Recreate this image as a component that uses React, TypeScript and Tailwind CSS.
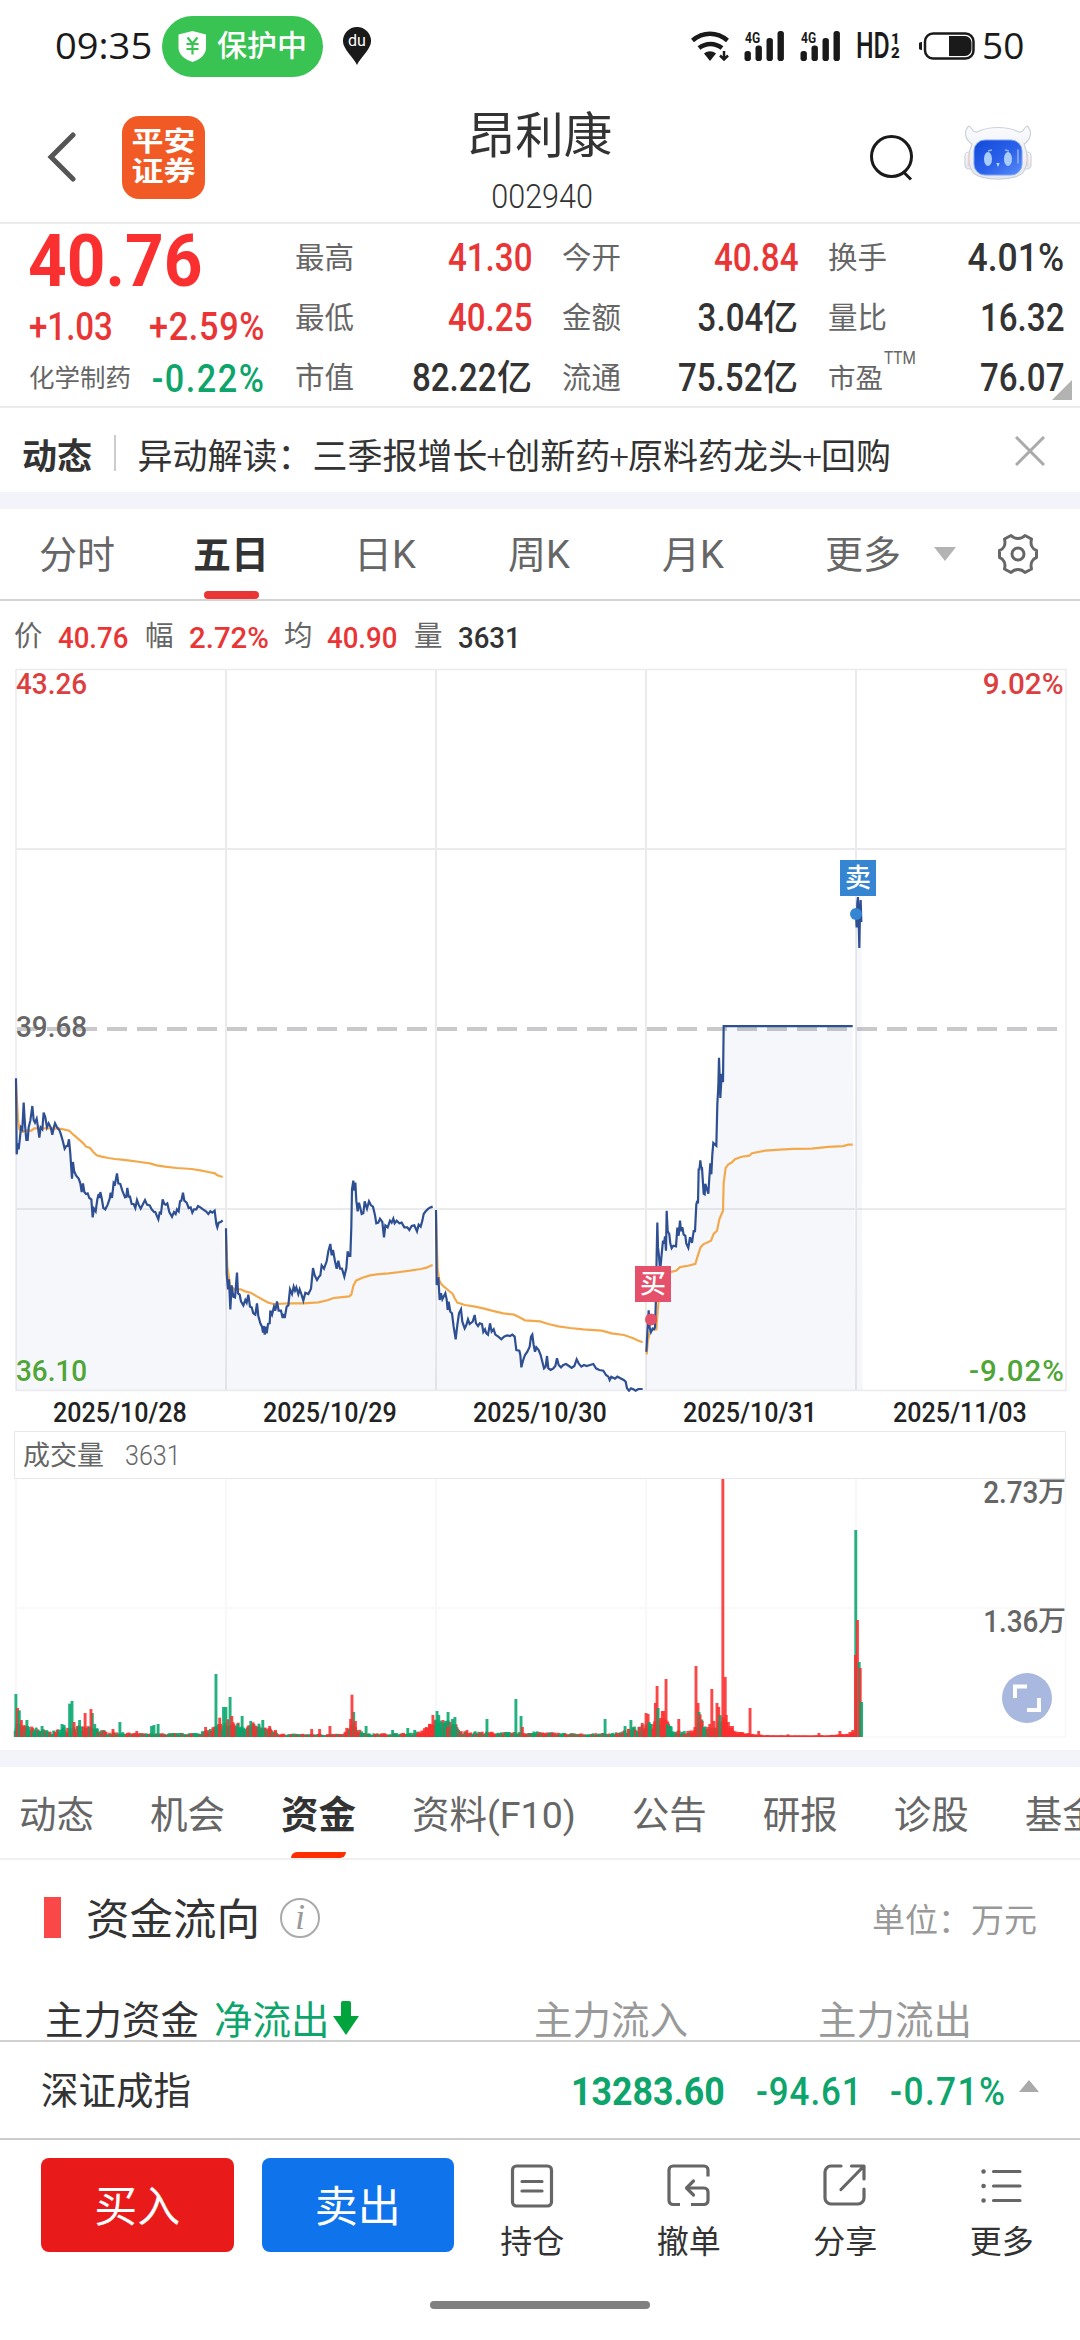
import type { ReactNode } from 'react';

/* ---------- price chart data (local units of each segment group) ---------- */

const DAY1_PRICE =
  '48,115 50,343 53,310 56,328 60,292 63,262 67,268 71,188 75,255 79,300 83,300 86,262 91,242 97,198 101,240 105,248 110,236 114,262 118,293 122,262 127,268 131,218 136,232 141,262 146,250 152,262 157,284 161,264 165,250 171,262 178,270 183,284 189,305 194,326 199,318 203,318 207,298 211,342 216,416 219,366 222,392 228,406 236,416 241,430 245,456 249,430 253,456 258,462 263,460 268,474 274,478 278,532 282,506 287,514 292,478 296,462 299,474 301,456 305,474 310,504 316,508 323,494 329,476 332,458 336,474 341,428 345,432 351,400 355,430 361,432 367,452 375,472 379,470 382,444 386,470 390,470 395,492 401,492 406,504 411,480 416,494 422,506 428,494 435,480 441,494 449,496 455,508 462,516 466,516 470,526 475,538 479,518 483,520 488,478 493,492 497,494 502,490 508,516 516,530 522,516 527,522 531,508 536,514 540,484 544,482 549,458 553,482 560,488 566,504 572,502 577,518 582,508 589,508 594,498 601,502 609,508 618,514 625,522 631,514 637,518 644,512 649,552 652,562 656,548 662,546 668,541';
const DAY1_AVG =
  '48,130 54,238 58,268 66,276 76,272 94,272 103,265 150,265 178,266 190,268 208,272 220,284 234,296 250,310 258,320 270,324 280,336 290,346 305,350 325,354 345,357 365,359 390,362 420,366 450,370 470,376 495,380 530,384 575,387 605,392 625,396 645,400 652,406 668,411';
const DAY2_PRICE =
  '678,565 680,700 684,748 687,718 691,808 695,736 700,770 705,772 711,698 714,760 719,764 723,784 730,796 736,780 740,788 745,764 750,800 755,802 760,820 766,824 771,790 775,828 781,850 786,860 789,878 791,858 794,884 797,860 800,880 804,852 809,850 811,812 816,824 822,800 826,812 831,784 836,812 843,812 848,834 851,822 854,834 860,800 865,796 870,748 876,762 881,740 885,752 889,742 895,762 899,748 904,762 910,782 916,758 925,762 933,746 939,684 944,706 951,720 957,710 961,706 965,676 972,686 980,664 985,634 991,612 995,646 999,630 1005,664 1010,686 1015,662 1020,686 1026,686 1033,710 1039,684 1043,634 1047,648 1051,648 1054,560 1056,448 1060,422 1063,452 1066,428 1069,482 1073,514 1077,488 1081,504 1085,522 1090,520 1094,484 1101,506 1107,484 1113,496 1119,500 1125,526 1129,550 1135,548 1140,536 1147,546 1152,592 1156,556 1163,562 1170,542 1175,548 1180,536 1184,550 1190,542 1198,550 1205,548 1213,562 1222,562 1228,570 1235,558 1243,556 1251,574 1256,554 1262,560 1267,542 1271,522 1277,514 1285,506 1292,502 1298,500';
const DAY2_AVG =
  '678,580 682,680 690,735 702,748 722,748 735,754 752,758 772,770 790,780 805,788 820,792 870,790 910,790 955,787 985,780 1000,774 1020,772 1048,769 1054,764 1060,738 1068,722 1085,714 1110,706 1130,703 1165,700 1200,696 1230,692 1262,687 1280,683 1290,678 1298,675';
const DAY3_PRICE =
  '48,510 50,735 55,712 59,780 63,760 67,778 72,768 76,760 80,778 83,810 86,785 91,815 96,820 101,860 107,898 112,855 117,820 123,808 127,845 134,865 139,855 144,838 149,852 158,845 164,825 168,850 174,858 179,850 186,852 190,876 195,868 199,880 204,884 210,850 215,875 221,868 226,884 235,890 244,898 252,890 261,886 270,888 277,884 284,890 289,930 298,932 301,945 304,982 309,962 315,945 322,935 329,920 333,890 337,884 341,915 345,935 349,922 356,930 362,945 367,965 372,985 377,980 381,948 385,985 392,990 400,985 406,978 411,955 416,975 423,982 430,975 438,972 447,978 455,984 463,978 470,958 476,970 484,980 492,975 500,978 510,975 520,972 528,985 538,990 550,992 558,1005 565,1010 569,1020 574,1010 585,1016 592,1010 600,1014 611,1020 617,1025 621,1045 627,1052 633,1045 640,1048 647,1052 655,1047 668,1047';
const DAY3_AVG =
  '48,520 53,690 58,722 64,732 72,740 84,750 98,762 104,775 112,788 135,795 165,800 190,805 215,812 250,820 282,824 298,832 315,841 360,844 385,852 415,859 450,864 490,868 545,872 575,880 612,885 640,895 652,901 668,907';
const DAY4_PRICE =
  '49,1433 52,1380 56,1317 59,1365 63,1378 68,1368 72,1370 75,1365 78,1280 80,1160 82,1071 84,1140 87,1165 90,1200 92,1190 96,1150 99,1122 102,1130 105,1110 108,1150 110,1038 113,1095 118,1104 121,1130 125,1143 130,1136 138,1138 142,1085 146,1108 150,1066 153,1095 157,1084 161,1105 166,1108 169,1130 175,1142 180,1112 186,1128 191,1095 195,1095 199,1020 202,1010 204,1018 206,920 208,925 211,897 213,915 216,918 221,990 224,992 226,963 230,975 235,990 238,945 241,905 244,936 247,880 250,848 259,856 262,740 265,690 267,610 271,722 275,655 279,678 281,521 668,521';
const DAY4_AVG =
  '50,1440 54,1400 60,1376 70,1370 79,1370 82,1330 87,1280 95,1225 120,1210 138,1206 150,1196 175,1192 196,1187 203,1165 212,1140 220,1132 243,1122 251,1103 261,1094 268,1062 279,1038 281,960 287,918 295,908 305,903 315,894 335,887 358,884 366,877 405,870 450,867 490,865 545,864 595,859 640,857 655,853 668,853';
const DAY5_PRICE = '678,208 680,245 682,175 684,160 686,225 688,302 690,200 692,168 694,230';

function PriceSegment({ price, avg, base, close }: { price: string; avg?: string; base: number; close: number }) {
  const first = price.slice(0, price.indexOf(','));
  return (
    <>
      <polygon points={`${first},${base} ${price} ${close},${base}`} fill="#3f63b8" fillOpacity={0.05} />
      {avg && <polyline points={avg} fill="none" stroke="#f3a94b" strokeWidth={2.2} vectorEffect="non-scaling-stroke" />}
      <polyline points={price} fill="none" stroke="#2f4f93" strokeWidth={2.2} vectorEffect="non-scaling-stroke" />
    </>
  );
}

function PriceChart() {
  return (
    <svg className="block" width={1080} height={724} viewBox="0 668 1080 724">
      <g stroke="#ebebed" strokeWidth={2} fill="none">
        <rect x={16} y={669.5} width={1050} height={721} strokeWidth={1.5} />
        <path d="M226 669V1390M436 669V1390M646 669V1390M856 669V1390" />
        <path d="M16 849H1066M16 1209H1066" />
      </g>
      <path d="M17 1029H1062" stroke="#c9c9cb" strokeWidth={4} strokeDasharray="20 10" />
      <g transform="translate(0 1040) scale(0.33333)">
        <PriceSegment price={DAY1_PRICE} avg={DAY1_AVG} base={1050} close={678} />
        <PriceSegment price={DAY2_PRICE} avg={DAY2_AVG} base={1050} close={1308} />
      </g>
      <g transform="translate(420 1040) scale(0.33333)">
        <PriceSegment price={DAY3_PRICE} avg={DAY3_AVG} base={1050} close={678} />
      </g>
      <g transform="translate(630 840) scale(0.33333 0.35714)">
        <PriceSegment price={DAY4_PRICE} avg={DAY4_AVG} base={1540} close={678} />
        <PriceSegment price={DAY5_PRICE} base={1540} close={698} />
      </g>
      <circle cx={651} cy={1319.5} r={6} fill="#e5506a" />
      <circle cx={856} cy={914} r={6} fill="#3585d3" />
    </svg>
  );
}

/* ---------- volume chart ---------- */

const ENVELOPE: [number, number][] = [
  [42, 50], [70, 36], [110, 28], [150, 16], [200, 36], [280, 30], [310, 16], [430, 10], [560, 12], [600, 20],
  [640, 44], [700, 46], [790, 26], [812, 9], [1000, 9], [1018, 60], [1045, 22], [1070, 10], [1200, 12], [1235, 28],
  [1262, 56], [1320, 48], [1335, 18], [1480, 14], [1560, 16], [1600, 14], [1700, 9], [1800, 14], [1860, 38],
  [1925, 66], [1960, 18], [2010, 20], [2040, 56], [2062, 24], [2100, 60], [2130, 22], [2180, 9], [2240, 4],
  [2400, 4], [2470, 10], [2482, 22],
];
const SPIKES: [number, number, 'r' | 'g'][] = [
  [46, 939, 'g'], [51, 981, 'r'], [56, 988, 'g'], [62, 1017, 'r'], [78, 1017, 'g'], [122, 1035, 'g'], [180, 1029, 'g'],
  [186, 1032, 'g'], [202, 968, 'g'], [209, 960, 'g'], [215, 1023, 'r'], [231, 1017, 'g'], [247, 996, 'r'],
  [268, 996, 'g'], [264, 984, 'r'], [275, 1029, 'g'], [328, 1044, 'r'], [348, 1023, 'g'], [397, 1050, 'r'],
  [440, 1035, 'g'], [447, 1032, 'g'], [459, 1029, 'g'], [597, 1038, 'r'], [627, 879, 'g'], [638, 1010, 'r'],
  [649, 978, 'g'], [656, 978, 'g'], [662, 1015, 'r'], [668, 948, 'g'], [673, 1005, 'r'], [679, 1028, 'r'],
  [690, 1028, 'g'], [703, 1005, 'g'], [728, 1020, 'g'], [735, 1024, 'r'], [752, 1028, 'g'], [763, 1017, 'g'],
  [783, 1035, 'r'], [800, 1047, 'r'], [905, 1044, 'r'], [928, 1044, 'r'], [958, 1035, 'r'], [1027, 993, 'g'],
  [1018, 1014, 'r'], [1022, 941, 'r'], [1032, 1020, 'r'], [1063, 1035, 'g'], [1140, 1047, 'g'], [1184, 1041, 'g'],
  [1204, 1047, 'g'], [1240, 1042, 'r'], [1247, 1029, 'r'], [1257, 1002, 'r'], [1269, 990, 'g'], [1274, 1002, 'g'],
  [1283, 1023, 'g'], [1292, 1026, 'g'], [1301, 993, 'g'], [1300, 1038, 'r'], [1314, 1014, 'g'], [1321, 1008, 'g'],
  [1356, 1047, 'r'], [1414, 1014, 'g'], [1498, 954, 'g'], [1513, 1005, 'g'], [1517, 1038, 'r'], [1757, 1014, 'g'],
  [1815, 1035, 'g'], [1832, 1017, 'g'], [1865, 1026, 'r'], [1876, 996, 'r'], [1882, 999, 'r'], [1885, 1023, 'g'],
  [1903, 966, 'r'], [1908, 915, 'r'], [1911, 981, 'g'], [1918, 1011, 'r'], [1923, 990, 'r'], [1928, 990, 'r'],
  [1934, 894, 'r'], [1938, 1029, 'g'], [1971, 1014, 'r'], [2027, 966, 'r'], [2021, 855, 'r'], [2030, 993, 'g'],
  [2033, 1000, 'r'], [2039, 1020, 'r'], [2043, 1038, 'g'], [2061, 1029, 'r'], [2067, 924, 'r'], [2073, 1020, 'r'],
  [2082, 966, 'r'], [2087, 978, 'r'], [2091, 1002, 'g'], [2106, 888, 'r'], [2099, 293, 'r'], [2109, 1002, 'r'],
  [2115, 1023, 'r'], [2127, 1035, 'r'], [2178, 981, 'r'], [2203, 1050, 'r'], [2288, 1060, 'r'], [2378, 1056, 'r'],
  [2439, 1050, 'r'], [2468, 1053, 'r'], [2476, 1047, 'r'], [2485, 447, 'g'], [2484, 822, 'r'], [2490, 717, 'r'],
  [2495, 843, 'g'], [2498, 861, 'r'], [2502, 963, 'g'],
];

function envelopeAt(x: number) {
  for (let i = 1; i < ENVELOPE.length; i++) {
    const [x0, h0] = ENVELOPE[i - 1];
    const [x1, h1] = ENVELOPE[i];
    if (x <= x1) return h0 + ((h1 - h0) * (x - x0)) / (x1 - x0);
  }
  return 0;
}

function baseBars() {
  const bars: [number, number, 'r' | 'g'][] = [];
  let seed = 7;
  const rnd = () => {
    seed = (seed * 16807) % 2147483647;
    return seed / 2147483647;
  };
  for (let x = 44; x < 2482; x += 2.54) {
    const h = envelopeAt(x) * (0.35 + rnd() * 0.65);
    const allRed = x > 2095 || (x > 1210 && x < 1258);
    bars.push([x, 1067 - Math.max(3, h), allRed || rnd() > 0.52 ? 'r' : 'g']);
  }
  return bars;
}

function VolumeChart() {
  const bars = [...baseBars(), ...SPIKES];
  return (
    <svg className="block" width={1080} height={272} viewBox="0 1478 1080 272">
      <path d="M16 1478V1736M226 1478V1736M436 1478V1736M646 1478V1736M856 1478V1736M16 1607H1066M1065.5 1478V1736H16" stroke="#f7f7f8" strokeWidth={1.6} fill="none" />
      {bars.map(([x, top, c], i) => (
        <rect
          key={i}
          x={x / 2.904 - 1.4}
          y={1380 + top / 3}
          width={2.9}
          height={(1067 - top) / 3 + 0.3}
          fill={c === 'r' ? '#f92f2f' : '#05a66c'}
          fillOpacity={0.88}
        />
      ))}
    </svg>
  );
}

/* ---------- icons ---------- */

function Signal() {
  return (
    <div className="relative h-[30px] w-[41px]">
      <span className="absolute left-[1px] top-[1px] origin-top-left scale-x-[0.86] text-[14px] leading-[12px] font-bold">4G</span>
      <svg width={41} height={30} viewBox="0 0 41 30" fill="#1a1a1a">
        <rect x={0.5} y={20} width={6.4} height={10} rx={2.8} />
        <rect x={11.5} y={14.5} width={6.4} height={15.5} rx={2.8} />
        <rect x={22.5} y={7} width={6.4} height={23} rx={2.8} />
        <rect x={33.5} y={0} width={6.4} height={30} rx={2.8} />
      </svg>
    </div>
  );
}

function Robot() {
  return (
    <svg width={68} height={56} viewBox="0 0 68 56">
      <defs>
        <linearGradient id="face" x1="0" y1="0" x2="1" y2="1">
          <stop offset="0" stopColor="#1148d8" />
          <stop offset="0.55" stopColor="#2c62ea" />
          <stop offset="1" stopColor="#5b8df8" />
        </linearGradient>
        <linearGradient id="shell" x1="0" y1="0" x2="0" y2="1">
          <stop offset="0" stopColor="#fbfbfd" />
          <stop offset="1" stopColor="#e4e8ef" />
        </linearGradient>
      </defs>
      <g stroke="#cdd2da" strokeWidth={1.2} fill="url(#shell)">
        <rect x={1} y={27} width={10} height={17} rx={4} />
        <rect x={57} y={27} width={10} height={17} rx={4} />
        <path d="M8 19C0 14 0 5 5 1C8 2 8 8 13 7C25 1 43 1 55 7C60 8 60 2 63 1C68 5 68 14 60 19C64 28 64 38 60 46C54 57 14 57 8 46C4 38 4 28 8 19Z" />
      </g>
      <path d="M4.5 29v12M63.500 29v12" stroke="#f0cfcb" strokeWidth={1.5} />
      <rect x={10} y={15} width={48} height={35} rx={11} fill="url(#face)" stroke="#7ba2f6" strokeWidth={1} />
      <ellipse cx={24} cy={34} rx={4} ry={7} fill="#a9ccfb" />
      <ellipse cx={44} cy={34} rx={4} ry={7} fill="#a9ccfb" />
      <path d="M24 26l4-1M41 25l4 1" stroke="#8eb7fa" strokeWidth={1.5} />
      <path d="M54 25v13" stroke="#8fb2fb" strokeWidth={1.500} strokeLinecap="round" />
      <path d="M32.300 38h3.400l-1.700 4z" fill="#bcd9fd" />
    </svg>
  );
}

const iconProps = {
  width: 44,
  height: 44,
  viewBox: '0 0 44 44',
  fill: 'none',
  stroke: '#666',
  strokeWidth: 3.2,
  strokeLinecap: 'round',
  strokeLinejoin: 'round',
} as const;

const HoldIcon = () => (
  <svg {...iconProps}>
    <rect x={2.500} y={2} width={39} height={40} rx={4} />
    <path d="M12 17.500H32M12 27H32" />
  </svg>
);
const CancelIcon = () => (
  <svg {...iconProps}>
    <path d="M13 40.500H6a4 4 0 0 1-4-4V6a4 4 0 0 1 4-4H37a4 4 0 0 1 4 4V12.500M24 40.500H37a4 4 0 0 0 4-4V28a4 4 0 0 0-4-4H20" strokeLinecap="butt" />
    <path d="M26.500 17L19.500 24L26.500 31" />
  </svg>
);
const ShareIcon = () => (
  <svg {...iconProps}>
    <path d="M18 2H8a6 6 0 0 0-6 6V34a6 6 0 0 0 6 6H35a6 6 0 0 0 6-6V25" />
    <path d="M18 25.500L40 3M28.500 2H41V15" />
  </svg>
);
const MoreIcon = () => (
  <svg {...iconProps}>
    <path d="M3.500 7.500h.1M3.500 22h.1M3.500 36.500h.1" strokeWidth={4.500} />
    <path d="M13.500 7.500H40M13.500 22H40M13.500 36.500H40" />
  </svg>
);

/* ---------- page parts ---------- */

function Stat({ label, sup, value, unit, up }: { label: string; sup?: string; value: string; unit?: string; up?: boolean }) {
  return (
    <div className="flex h-[60px] items-center justify-between pt-px">
      <span className={sup ? 'relative text-[27.5px] text-[#666]' : 'text-[29.5px] text-[#666]'}>
        {label}
        {sup && <span className="absolute left-[56px] top-[-16px] origin-left scale-x-[0.85] text-[18px]">{sup}</span>}
      </span>
      <span className={up ? 'flex items-center text-[39px] font-medium text-[#e93535]' : 'flex items-center text-[39px] font-medium text-[#333]'}>
        <span className={value.endsWith('%') ? 'origin-right scale-x-[0.91]' : 'origin-right scale-x-[0.85]'}>{value}</span>
        {unit && <span className="text-[35px]">{unit}</span>}
      </span>
    </div>
  );
}

function PeriodTab({ children, active }: { children: ReactNode; active?: boolean }) {
  return (
    <div className={active ? 'relative flex w-[154px] items-center justify-center pt-[2px] font-bold text-[#333]' : 'flex w-[154px] items-center justify-center pt-[2px]'}>
      {children}
      {active && <span className="absolute bottom-0 h-[8px] w-[55px] rounded-[4px] bg-[#e93535]" />}
    </div>
  );
}

function Action({ icon, label }: { icon: ReactNode; label: string }) {
  return (
    <div className="flex w-[156.500px] flex-col items-center gap-[18px] pt-[24px] text-[32px] text-[#333]">
      {icon}
      <span>{label}</span>
    </div>
  );
}

const DATES = ['2025/10/28', '2025/10/29', '2025/10/30', '2025/10/31', '2025/11/03'];
const NEWS = ['异动解读：三季报增长', '创新药', '原料药龙头', '回购'];

export default function App() {
  return (
    <div className="flex h-[2340px] w-[1080px] flex-col overflow-hidden bg-white font-[Roboto,'Noto_Sans_CJK_SC',sans-serif] leading-none whitespace-nowrap text-[#333]">
      {/* status bar */}
      <div className="flex h-[92px] shrink-0 items-center pr-[56px] pl-[55px] text-[#1a1a1a]">
        <span className="mt-[-3px] w-[107px] font-['Open_Sans'] text-[37px] leading-none">
          <span className="inline-block origin-left scale-x-[1.03]">09:35</span>
        </span>
        <div className="flex h-[61px] w-[161px] items-center rounded-full bg-[#38c353] pl-[16px] text-white">
          <svg width={29} height={31} viewBox="0 0 29 31">
            <path d="M14.500 0L28 3.500V17C28 24 21 29 14.500 31C8 29 0.500 24 0.500 17V3.500Z" fill="#fff" />
            <path d="M9.500 6.500L14.500 12.500L19.500 6.500M8.500 13H20.500M8.500 18H20.500M14.500 12.500V23.500" stroke="#38c353" strokeWidth={2.200} fill="none" />
          </svg>
          <span className="ml-[10px] text-[30px] font-medium">保护中</span>
        </div>
        <div className="relative ml-[20px] h-[38px] w-[28px]">
          <svg width={28} height={38} viewBox="0 0 28 38">
            <path d="M14 0a14 14 0 0 1 14 14.500C28 22 17 31 14 38C11 31 0 22 0 14.500A14 14 0 0 1 14 0Z" fill="#1a1a1a" />
          </svg>
          <span className="absolute inset-x-0 top-[6px] text-center text-[16px] text-white">du</span>
        </div>
        <div className="ml-auto flex h-[30px] items-center">
          <svg width={39} height={30} viewBox="0 0 39 30" fill="none" stroke="#1a1a1a" strokeWidth={4.500}>
            <path d="M1.500 9.500C12 .500 26 .500 36.500 9.500" />
            <path d="M8 17C15 11.500 24 11.500 31 17" />
            <path d="M13 22.500C17 19.500 21 19.500 25 22.500L19 30Z" fill="#1a1a1a" stroke="none" />
            <path d="M33 20V28M29 24.500L33 28.500L37 24.500" strokeWidth={2.500} />
          </svg>
          <div className="ml-[14px]"><Signal /></div>
          <div className="ml-[15px]"><Signal /></div>
          <span className="ml-[15px] flex w-[35px] text-[36px] font-medium">
            <span className="origin-left scale-x-[0.69]">HD</span>
          </span>
          <span className="flex w-[11px] flex-col text-[15px] leading-[14px] font-black">
            <span>1</span>
            <span>2</span>
          </span>
          <svg className="ml-[17px]" width={57} height={30} viewBox="0 0 57 30">
            <rect x={6} y={2.500} width={48.500} height={25} rx={8} fill="none" stroke="#1a1a1a" strokeWidth={2.500} />
            <path d="M30 5H46a6.500 6.500 0 0 1 6.500 6.500V18.500a6.500 6.500 0 0 1-6.500 6.500H30Z" fill="#1a1a1a" />
            <path d="M3 11a4 4 0 0 0 0 8Z" fill="#1a1a1a" />
          </svg>
          <span className="mt-[-3px] ml-[6px] w-[42px] font-['Open_Sans'] text-[37px] leading-none">50</span>
        </div>
      </div>

      {/* title bar */}
      <header className="grid h-[132px] shrink-0 grid-cols-[1fr_auto_1fr] items-center border-b-2 border-[#ebebeb]">
        <div className="flex items-center pl-[47px]">
          <svg width={29} height={50} viewBox="0 0 29 50" fill="none" stroke="#555" strokeWidth={5} strokeLinecap="round">
            <path d="M26 3L4 25L26 47" strokeLinejoin="miter" />
          </svg>
          <div className="ml-[46px] flex size-[83px] items-center justify-center rounded-[17px] bg-[#f15a24]">
            <div className="flex scale-y-[0.84] flex-col text-[32px] leading-[35px] font-bold text-white">
              <span>平安</span>
              <span>证券</span>
            </div>
          </div>
        </div>
        <div className="flex flex-col items-center pt-[12px] pr-px">
          <span className="text-[48.500px]">昂利康</span>
          <span className="mt-[20px] ml-[5px] scale-x-[0.94] text-[32.500px] font-light">002940</span>
        </div>
        <div className="flex items-center justify-end pr-[48px]">
          <svg width={44} height={48} viewBox="0 0 44 48" fill="none" stroke="#1a1a1a" strokeWidth={3}>
            <circle cx={22.500} cy={23.500} r={20} />
            <path d="M34 38.500L42 46.500" />
          </svg>
          <div className="mt-[-8px] ml-[51px]"><Robot /></div>
        </div>
      </header>

      {/* quote summary */}
      <section className="relative flex h-[184px] shrink-0 gap-[30px] border-b-2 border-[#ebebeb] pt-[4px] pl-[30px]">
        <div className="w-[235px]">
          <div className="flex h-[66px] items-center pt-px text-[73px] font-bold text-[#fa3030]">
            <span className="ml-[-2px] origin-left scale-x-[0.925]">40.76</span>
          </div>
          <div className="flex h-[64px] items-center justify-between pt-px text-[38px] font-medium text-[#e93535]">
            <span className="ml-[-1px] origin-left scale-x-[0.87]">+1.03</span>
            <span className="origin-right scale-x-[0.9] tracking-[0.8px]">+2.59%</span>
          </div>
          <div className="flex h-[40px] items-center justify-between pt-px">
            <span className="ml-[-1px] text-[25.500px] text-[#666]">化学制药</span>
            <span className="origin-right scale-x-[0.9] text-[38px] font-medium tracking-[1.7px] text-[#0da56b]">-0.22%</span>
          </div>
        </div>
        <div className="w-[237px]">
          <Stat label="最高" value="41.30" up />
          <Stat label="最低" value="40.25" up />
          <Stat label="市值" value="82.22" unit="亿" />
        </div>
        <div className="w-[236px]">
          <Stat label="今开" value="40.84" up />
          <Stat label="金额" value="3.04" unit="亿" />
          <Stat label="流通" value="75.52" unit="亿" />
        </div>
        <div className="w-[236px]">
          <Stat label="换手" value="4.01%" />
          <Stat label="量比" value="16.32" />
          <Stat label="市盈" sup="TTM" value="76.07" />
        </div>
        <svg className="absolute right-[8px] bottom-[6px]" width={20} height={20}>
          <path d="M20 0V20H0Z" fill="#b3b3b3" />
        </svg>
      </section>

      {/* news strip */}
      <section className="flex h-[84px] shrink-0 items-center pt-[14px] pr-[35px] pl-[22px] text-[35px]">
        <span className="font-bold">动态</span>
        <span className="mt-[-8px] ml-[22px] h-[36px] w-[1.500px] bg-[#ccc]" />
        <span className="ml-[22px]">
          {NEWS.map((part, i) => (
            <span key={part}>
              {i > 0 && <span className="mx-[-1px] font-light">+</span>}
              {part}
            </span>
          ))}
        </span>
        <svg className="mt-[-12px] ml-auto" width={30} height={30} viewBox="0 0 30 30" stroke="#aaa" strokeWidth={3}>
          <path d="M1 1L29 29M29 1L1 29" />
        </svg>
      </section>
      <div className="h-[17px] shrink-0 bg-[#f3f4f9]" />

      {/* chart period tabs */}
      <nav className="flex h-[92px] shrink-0 border-b-2 border-[#d3d3d3] text-[38px] text-[#666]">
        <PeriodTab>分时</PeriodTab>
        <PeriodTab active>五日</PeriodTab>
        <PeriodTab>日K</PeriodTab>
        <PeriodTab>周K</PeriodTab>
        <PeriodTab>月K</PeriodTab>
        <div className="flex items-center pl-[55px]">
          <span className="pt-[2px]">更多</span>
          <svg className="ml-[33px]" width={22} height={14}>
            <path d="M0 0H22L11 14Z" fill="#b3b3b3" />
          </svg>
          <svg className="ml-[41px]" width={42} height={42} viewBox="0 0 42 42" fill="none" stroke="#666" strokeWidth={3} strokeLinejoin="round">
            <path d="M14 2.500C18 6.500 24 6.500 28 2.500L34.500 6C33 12 35.500 16 39.500 17.500V24.500C35.500 26 33 30 34.500 36L28 39.500C24 35.500 18 35.500 14 39.500L7.500 36C9 30 6.500 26 2.500 24.500V17.500C6.500 16 9 12 7.500 6Z" />
            <circle cx={21} cy={21} r={6} />
          </svg>
        </div>
      </nav>

      {/* current point figures */}
      <div className="flex h-[67px] shrink-0 items-center pt-[6px] pl-[14px] text-[28.500px] text-[#666]">
        <span className="w-[44px]">价</span>
        <span className="w-[87px] text-[30px] font-medium text-[#e93535]"><span className="inline-block origin-left scale-x-[0.92]">40.76</span></span>
        <span className="w-[44px]">幅</span>
        <span className="w-[95px] text-[30px] font-medium text-[#e93535]"><span className="inline-block origin-left scale-x-[0.98]">2.72%</span></span>
        <span className="w-[43px]">均</span>
        <span className="w-[87px] text-[30px] font-medium text-[#e93535]"><span className="inline-block origin-left scale-x-[0.92]">40.90</span></span>
        <span className="w-[44px]">量</span>
        <span className="text-[30px] font-medium text-[#333]"><span className="inline-block origin-left scale-x-[0.92]">3631</span></span>
      </div>

      {/* price chart */}
      <div className="relative h-[724px] shrink-0 text-[30px] font-medium">
        <PriceChart />
        <span className="absolute top-[1px] left-[16px] origin-left scale-x-[0.93] text-[#dc3f3f]">43.26</span>
        <span className="absolute top-[1px] right-[16px] origin-right scale-x-[0.99] text-[#dc3f3f]">9.02%</span>
        <span className="absolute top-[344px] left-[16px] origin-left scale-x-[0.93] text-[#666]">39.68</span>
        <span className="absolute top-[688px] left-[16px] origin-left scale-x-[0.93] text-[#4fa535]">36.10</span>
        <span className="absolute top-[688px] right-[15px] origin-right scale-x-[0.98] tracking-[1px] text-[#4fa535]">-9.02%</span>
        <span className="absolute top-[192px] left-[840px] flex h-[36px] w-[36px] items-center justify-center bg-[#3585d3] text-[26px] text-white">卖</span>
        <span className="absolute top-[598px] left-[635px] flex h-[36px] w-[36px] items-center justify-center bg-[#e5506a] text-[26px] text-white">买</span>
      </div>
      <div className="flex h-[39px] shrink-0 items-center pt-[4px] pl-[15px] text-[28.500px] font-medium text-[#222]">
        {DATES.map((d) => (
          <span key={d} className="flex w-[210px] justify-center"><span className="scale-x-[0.88]">{d}</span></span>
        ))}
      </div>

      {/* volume */}
      <div className="mx-[14px] flex h-[48px] shrink-0 items-center border border-[#e8e8ea] pt-[3px] pl-[8px] text-[27px] text-[#666]">
        <span>成交量</span>
        <span className="ml-[21px] origin-left scale-x-[0.88] text-[28.500px] font-light">3631</span>
      </div>
      <div className="relative h-[271px] shrink-0 text-[28px] font-medium text-[#666]">
        <VolumeChart />
        <span className="absolute top-[-2px] right-[14px] flex items-center"><span className="origin-right scale-x-[0.9] text-[31px]">2.73</span>万</span>
        <span className="absolute top-[127px] right-[14px] flex items-center"><span className="origin-right scale-x-[0.9] text-[31px]">1.36</span>万</span>
        <svg className="absolute top-[194px] left-[1002px]" width={50} height={50} viewBox="0 0 50 50">
          <circle cx={25} cy={25} r={25} fill="#a9b8de" />
          <path d="M13 25V13.500H25M37 25V37H25" fill="none" stroke="#fff" strokeWidth={4} />
        </svg>
      </div>
      <div className="h-[17px] shrink-0 bg-[#f3f4f9]" />

      {/* detail tabs */}
      <nav className="flex h-[93px] shrink-0 gap-[56px] overflow-hidden border-b-2 border-[#f0f0f0] pl-[19px] text-[37.500px] text-[#666]">
        {['动态', '机会', '资金', '资料(F10)', '公告', '研报', '诊股', '基金'].map((t) => (
          <div key={t} className={t === '资金' ? 'relative flex shrink-0 items-center justify-center pt-[6px] font-bold text-[#333]' : 'flex shrink-0 items-center pt-[6px]'}>
            {t}
            {t === '资金' && <span className="absolute bottom-0 h-[6px] w-[55px] rounded-tl-[6px] rounded-br-[6px] bg-[#ff2d00]" />}
          </div>
        ))}
      </nav>

      {/* fund flow */}
      <section className="h-[180px] shrink-0">
        <div className="flex h-[80px] items-center pt-[37px] pr-[43px] pl-[44px]">
          <span className="mt-[-2px] h-[41px] w-[17px] bg-[#fa4848]" />
          <span className="mt-[4px] ml-[25px] text-[43.500px]">资金流向</span>
          <span className="mt-[-2px] ml-[20px] flex size-[40px] items-center justify-center rounded-full border-2 border-[#aaa] font-['Liberation_Serif'] text-[35px] leading-none text-[#999] italic">i</span>
          <span className="mt-[3px] ml-auto text-[33px] text-[#999]">单位：万元</span>
        </div>
        <div className="mt-[60px] flex h-[40px] items-center pt-[3px] pl-[45px] text-[38.500px]">
          <span>主力资金</span>
          <span className="ml-[15px] w-[116px] text-[#0da56b]">净流出</span>
          <svg className="mt-[-8px] ml-[2px]" width={28} height={34} viewBox="0 0 28 34">
            <path d="M9 2a2 2 0 0 1 2-2h6a2 2 0 0 1 2 2V15h8L14 34L1 15H9Z" fill="#00a33c" />
          </svg>
          <span className="ml-[174px] w-[154px] text-[#999]">主力流入</span>
          <span className="ml-[130px] text-[#999]">主力流出</span>
        </div>
      </section>

      {/* index ticker */}
      <section className="flex h-[98px] shrink-0 items-center border-t-2 border-[#d0d0d0] pt-[4px] pr-[41px] pl-[41px] text-[37.500px]">
        <span>深证成指</span>
        <div className="ml-auto flex items-center text-[38px] font-medium text-[#0da56b]">
          <span className="flex w-[155px]"><span className="origin-left scale-x-[0.94] font-bold">13283.60</span></span>
          <span className="ml-[30px] flex w-[104px]"><span className="origin-left scale-x-[0.92] tracking-[1px]">-94.61</span></span>
          <span className="ml-[30px] flex w-[116px]"><span className="origin-left scale-x-[0.93] tracking-[1.500px]">-0.71%</span></span>
        </div>
        <svg className="mt-[-12px] ml-[13px]" width={20} height={12}>
          <path d="M0 12H20L10 0Z" fill="#aaa" />
        </svg>
      </section>

      {/* bottom bar */}
      <footer className="flex h-[120px] shrink-0 border-t-2 border-[#ccc] pl-[41px]">
        <button className="mt-[18px] flex h-[94px] w-[193px] items-center justify-center rounded-[8px] bg-[#e91a1a] pt-[4px] text-[43px] text-white">买入</button>
        <button className="mt-[18px] ml-[28px] flex h-[94px] w-[193px] items-center justify-center rounded-[8px] bg-[#0f73ec] pt-[4px] text-[43px] text-white">卖出</button>
        <div className="flex">
          <Action icon={<HoldIcon />} label="持仓" />
          <Action icon={<CancelIcon />} label="撤单" />
          <Action icon={<ShareIcon />} label="分享" />
          <Action icon={<MoreIcon />} label="更多" />
        </div>
      </footer>
      <div className="flex grow justify-center pt-[43px]">
        <span className="h-[8px] w-[220px] rounded-full bg-[#808080]" />
      </div>
    </div>
  );
}
